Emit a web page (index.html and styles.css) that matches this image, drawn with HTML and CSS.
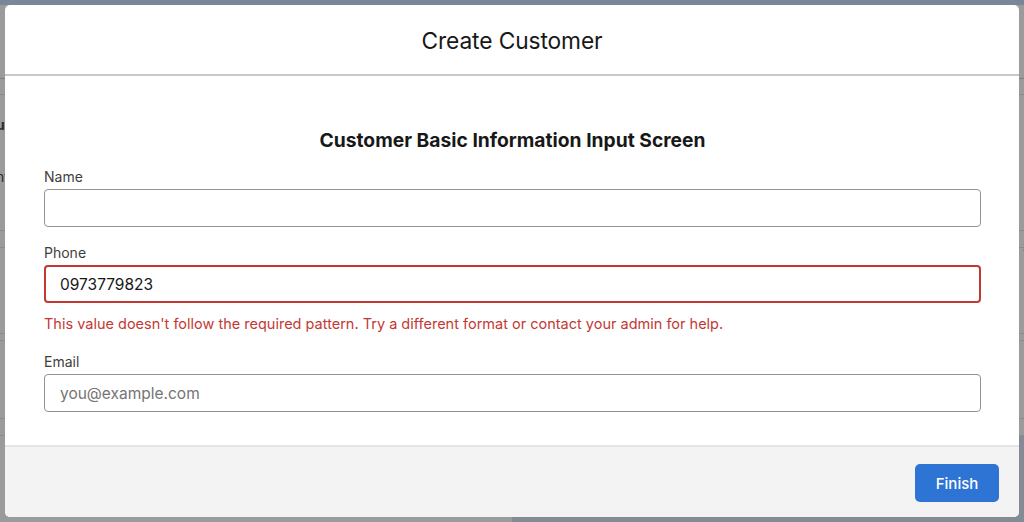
FILE: index.html
```html
<!DOCTYPE html>
<html lang="en">
<head>
<meta charset="utf-8">
<title>Create Customer</title>
<link rel="stylesheet" href="styles.css">
</head>
<body>
<div class="backdrop">
  <div class="bg-top"></div>
  <div class="bg-row r1"></div>
  <div class="bg-row r2"></div>
  <div class="bg-row r3">
    <span class="bg-txt left bold t-u">u</span>
    <span class="bg-txt left t-nt">nt</span>
  </div>
  <div class="bg-row r4"></div>
  <div class="bg-row r5">
    <span class="bg-txt right bold t-3">3</span>
    <span class="bg-txt right t-a">a</span>
  </div>
  <div class="bg-row r6"></div>
  <div class="bg-row r7"><span class="bg-txt right t-ti">ti</span></div>
  <div class="bg-row r8"></div>
  <div class="bg-row r9"></div>
</div>

<div class="modal" role="dialog" aria-labelledby="modal-title">
  <header class="modal-header">
    <h1 id="modal-title" class="modal-title">Create Customer</h1>
  </header>
  <main class="modal-body">
    <h2 class="screen-title">Customer Basic Information Input Screen</h2>
    <div class="field">
      <label class="field-label" for="name">Name</label>
      <input class="field-input" id="name" type="text">
    </div>
    <div class="field">
      <label class="field-label" for="phone">Phone</label>
      <input class="field-input is-error" id="phone" type="text" value="0973779823">
      <div class="field-error">This value doesn't follow the required pattern. Try a different format or contact your admin for help.</div>
    </div>
    <div class="field">
      <label class="field-label" for="email">Email</label>
      <input class="field-input" id="email" type="email" placeholder="you@example.com">
    </div>
  </main>
  <footer class="modal-footer">
    <button class="btn-brand" type="button">Finish</button>
  </footer>
</div>
</body>
</html>
```

FILE: styles.css
```css
* { box-sizing: border-box; }
html, body {
  margin: 0;
  padding: 0;
  width: 1024px;
  height: 522px;
  overflow: hidden;
}
body {
  font-family: Inter, "Liberation Sans", Arial, sans-serif;
  background: #9a9a9a;
  color: #181818;
}

/* backdrop (page behind the modal) */
.backdrop {
  height: 522px;
  display: flex;
  flex-direction: column;
  background: #9b9b9b;
}
.bg-top {
  height: 5px;
  flex: none;
  background: #7b8698;
}
.bg-row {
  position: relative;
  flex: none;
  border-bottom: 1px solid #8b8b8b;
}
.r1 { height: 74px; border-bottom-color: #7e7e7e; }
.r2 { height: 16px; }
.r3 { height: 136px; }
.r4 { height: 17px; }
.r5 { height: 86px; }
.r6 { height: 7px; }
.r7 { height: 78px; }
.r8 { height: 17px; }
.r9 {
  flex: 1;
  border-bottom: none;
  background: linear-gradient(to right, #9b9b9b 0 50%, #858b95 50% 100%);
}
.bg-txt {
  position: absolute;
  font-size: 14px;
  line-height: 18px;
  color: #2a2a2a;
}
.bg-txt.left { left: -4px; }
.bg-txt.right { right: -8px; }
.bg-txt.bold { font-weight: 700; }
.t-u { top: 21px; }
.t-nt { top: 73px; left: -8px; }
.t-3 { top: -9px; }
.t-a { top: 45px; }
.t-ti { top: 7px; }

/* modal */
.modal {
  position: absolute;
  left: 5px;
  top: 5px;
  width: 1014px;
  height: 512px;
  background: #fff;
  border-radius: 5px;
  overflow: hidden;
  display: flex;
  flex-direction: column;
}
.modal-header {
  height: 71px;
  border-bottom: 2px solid #c9c9c9;
  display: flex;
  align-items: center;
  justify-content: center;
  padding-top: 2px;
}
.modal-title {
  margin: 0;
  font-size: 22.75px;
  font-weight: 400;
  color: #181818;
  letter-spacing: -0.1px;
}
.modal-body {
  flex: 1;
  padding: 52px 38px 0 39px;
}
.screen-title {
  margin: 0 0 16px;
  text-align: center;
  font-size: 19.25px;
  font-weight: 700;
  line-height: 24px;
  color: #181818;
}
.field { margin-bottom: 17px; }
.field-label {
  display: block;
  font-size: 14px;
  line-height: 18px;
  color: #3e3e3c;
  margin-bottom: 3px;
}
.field-input {
  display: block;
  width: 100%;
  height: 38px;
  border: 1px solid #939393;
  border-radius: 4px;
  padding: 0 15px;
  font-family: inherit;
  font-size: 15.5px;
  color: #181818;
  background: #fff;
  outline: none;
}
.field-input::placeholder { color: #747474; }
.field-input.is-error {
  border: 2px solid #c23934;
  padding: 0 14px;
}
.field-error {
  margin-top: 12px;
  padding-bottom: 3px;
  font-size: 14.5px;
  line-height: 18px;
  color: #c23934;
}

.modal-footer {
  height: 72px;
  background: #f3f3f3;
  border-top: 2px solid #e5e5e5;
  display: flex;
  justify-content: flex-end;
  align-items: flex-start;
  padding: 17px 20px 0 0;
}
.btn-brand {
  width: 84px;
  height: 38px;
  border: none;
  border-radius: 5px;
  background: #2e74d4;
  color: #fff;
  font-family: inherit;
  font-size: 15px;
  font-weight: 500;
}
```
